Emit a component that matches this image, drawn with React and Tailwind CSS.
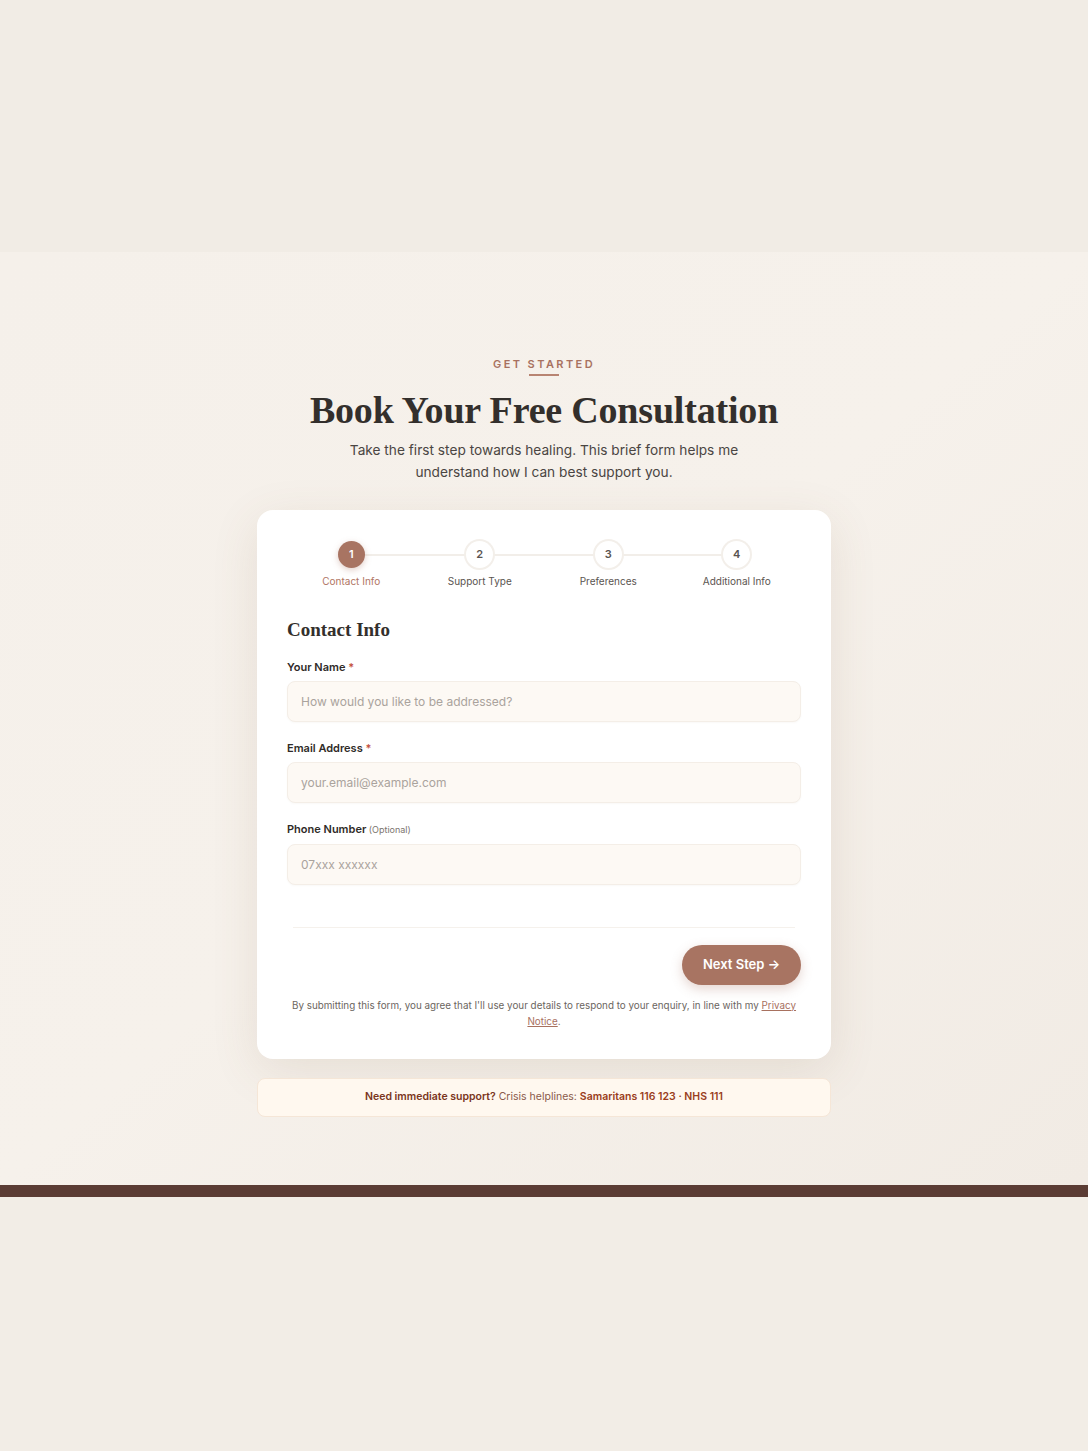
const steps = [
  { n: 1, label: "Contact Info", active: true },
  { n: 2, label: "Support Type" },
  { n: 3, label: "Preferences" },
  { n: 4, label: "Additional Info" },
];

const sans = "font-['Inter','Liberation_Sans',sans-serif]";
const serif = "font-['Liberation_Serif','DejaVu_Serif',serif]";

function Field({ label, required, optional, placeholder }) {
  return (
    <div className="flex flex-col">
      <label className="text-[11px] font-semibold text-[#2f2b28] leading-4">
        {label}
        {required && <span className="text-[#c4513f]"> *</span>}
        {optional && <span className="font-normal text-[9px] text-[#7b746e]"> (Optional)</span>}
      </label>
      <input
        placeholder={placeholder}
        className="mt-[6px] h-[41px] w-full rounded-lg border border-[#f4eee7] bg-[#fdf9f4] px-[13px] text-[12px] text-[#2f2b28] placeholder:text-[#aaa39d] outline-none shadow-[0_1px_2px_rgba(120,90,60,0.04)]"
      />
    </div>
  );
}

export default function App() {
  return (
    <div className={`min-h-[1451px] w-full bg-[#f2ede6] ${sans}`}>
      <div className="h-[252px] bg-[#f1ece5]" />
      <section className="bg-gradient-to-br from-[#f5f0ea] via-[#f6f1eb] to-[#f1ebe4] pt-[104px] pb-[68px] border-b-[12px] border-[#5b3c34]">
        <div className="flex flex-col items-center text-center">
          <p className="text-[11px] font-semibold tracking-[0.22em] text-[#a8715f] leading-4">GET STARTED</p>
          <div className="mt-[2px] h-[1.5px] w-[30px] bg-[#b88472]" />
          <h1 className={`${serif} mt-[12px] text-[38px] font-bold leading-[44px] text-[#332f2c] tracking-[-0.005em]`}>
            Book Your Free Consultation
          </h1>
          <p className="mt-[7px] max-w-[400px] text-[13.7px] leading-[22px] text-[#4a4542]">
            Take the first step towards healing. This brief form helps me understand how I can best support you.
          </p>
        </div>

        <div className="mx-auto mt-[27px] w-[574px] rounded-2xl bg-white px-[30px] pt-[31px] pb-[30px] shadow-[0_12px_48px_rgba(120,90,60,0.12)]">
          <div className="relative grid grid-cols-4">
            <div className="absolute left-[64px] right-[64px] top-[13px] h-[2px] bg-[#f2eee9]" />
            {steps.map((s) => (
              <div key={s.n} className="relative flex flex-col items-center">
                <div
                  className={
                    s.active
                      ? "flex h-[27px] w-[27px] items-center justify-center rounded-full bg-[#a87462] text-[11px] font-semibold text-white shadow-[0_2px_6px_rgba(168,116,98,0.35)]"
                      : "flex h-[27px] w-[27px] items-center justify-center rounded-full bg-white text-[11px] font-semibold text-[#5a5450] shadow-[0_0_0_2px_#f3efea]"
                  }
                >
                  {s.n}
                </div>
                <span className={`mt-[5px] text-[10px] leading-4 ${s.active ? "text-[#b07563]" : "text-[#5a5450]"}`}>
                  {s.label}
                </span>
              </div>
            ))}
          </div>

          <h2 className={`${serif} mt-[29px] text-[19px] font-bold text-[#332f2c] leading-6`}>Contact Info</h2>

          <div className="mt-[17px] flex flex-col gap-[18px]">
            <Field label="Your Name" required placeholder="How would you like to be addressed?" />
            <Field label="Email Address" required placeholder="your.email@example.com" />
            <Field label="Phone Number" optional placeholder="07xxx xxxxxx" />
          </div>

          <div className="mx-[6px] mt-[42px] h-px bg-[#f5f1ec]" />

          <div className="mt-[17px] flex justify-end">
            <button className="flex h-[40px] w-[119px] items-center justify-center rounded-full bg-[#a87462] text-[13px] font-semibold text-white shadow-[0_4px_12px_rgba(168,116,98,0.3)]">
              Next Step →
            </button>
          </div>

          <p className="mx-auto mt-[12px] max-w-[506px] text-center text-[9.85px] leading-4 text-[#6b6560]">
            By submitting this form, you agree that I'll use your details to respond to your enquiry, in line with my{" "}
            <a className="text-[#a8715f] underline">Privacy Notice</a>.
          </p>
        </div>

        <div className="mx-auto mt-[19px] flex h-[39px] w-[574px] items-center justify-center rounded-lg border border-[#f5e6d7] bg-[#fff8ef] text-[10.5px]">
          <p>
            <span className="font-semibold text-[#7a3520]">Need immediate support?</span>{" "}
            <span className="text-[#8a5a4a]">Crisis helplines:</span>{" "}
            <span className="font-semibold text-[#9a3d20]">Samaritans 116 123 · NHS 111</span>
          </p>
        </div>
      </section>
    </div>
  );
}
